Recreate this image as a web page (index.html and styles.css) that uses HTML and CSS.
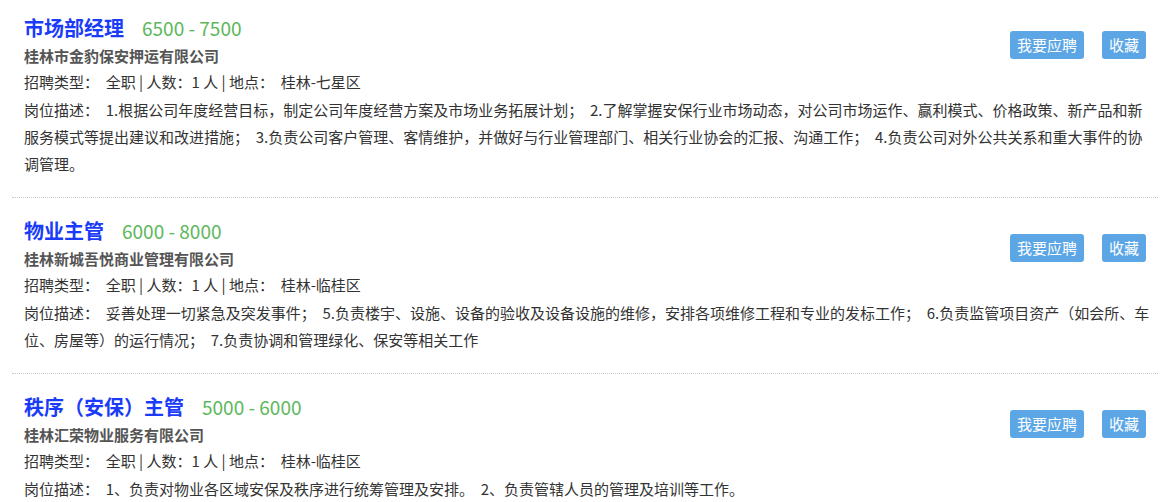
FILE: index.html
```html
<!DOCTYPE html>
<html lang="zh-CN">
<head>
  <meta charset="UTF-8">
  <meta name="viewport" content="width=device-width, initial-scale=1.0">
  <title>招聘职位列表</title>

  <link rel="stylesheet" href="styles.css">

</head>
<body>

  <ul class="job-list">
    <li class="job-item">
      <div class="job-head">
        <div class="job-main">
          <h3 class="job-title"><a href="#">市场部经理</a><span class="salary">6500 - 7500</span></h3>
          <p class="company">桂林市金豹保安押运有限公司</p>
        </div>
        <div class="job-actions">
          <a href="#" class="btn">我要应聘</a>
          <a href="#" class="btn">收藏</a>
        </div>
      </div>
      <p class="job-meta">招聘类型：&nbsp; 全职 | 人数：1 人 | 地点：&nbsp; 桂林-七星区</p>
      <p class="job-desc">岗位描述：&nbsp; 1.根据公司年度经营目标，制定公司年度经营方案及市场业务拓展计划；&nbsp; 2.了解掌握安保行业市场动态，对公司市场运作、赢利模式、价格政策、新产品和新服务模式等提出建议和改进措施；&nbsp; 3.负责公司客户管理、客情维护，并做好与行业管理部门、相关行业协会的汇报、沟通工作；&nbsp; 4.负责公司对外公共关系和重大事件的协调管理。</p>
    </li>

    <li class="job-item">
      <div class="job-head">
        <div class="job-main">
          <h3 class="job-title"><a href="#">物业主管</a><span class="salary">6000 - 8000</span></h3>
          <p class="company">桂林新城吾悦商业管理有限公司</p>
        </div>
        <div class="job-actions">
          <a href="#" class="btn">我要应聘</a>
          <a href="#" class="btn">收藏</a>
        </div>
      </div>
      <p class="job-meta">招聘类型：&nbsp; 全职 | 人数：1 人 | 地点：&nbsp; 桂林-临桂区</p>
      <p class="job-desc">岗位描述：&nbsp; 妥善处理一切紧急及突发事件；&nbsp; 5.负责楼宇、设施、设备的验收及设备设施的维修，安排各项维修工程和专业的发标工作；&nbsp; 6.负责监管项目资产（如会所、车位、房屋等）的运行情况；&nbsp; 7.负责协调和管理绿化、保安等相关工作</p>
    </li>

    <li class="job-item">
      <div class="job-head">
        <div class="job-main">
          <h3 class="job-title"><a href="#">秩序（安保）主管</a><span class="salary">5000 - 6000</span></h3>
          <p class="company">桂林汇荣物业服务有限公司</p>
        </div>
        <div class="job-actions">
          <a href="#" class="btn">我要应聘</a>
          <a href="#" class="btn">收藏</a>
        </div>
      </div>
      <p class="job-meta">招聘类型：&nbsp; 全职 | 人数：1 人 | 地点：&nbsp; 桂林-临桂区</p>
      <p class="job-desc">岗位描述：&nbsp; 1、负责对物业各区域安保及秩序进行统筹管理及安排。&nbsp; 2、负责管辖人员的管理及培训等工作。</p>
    </li>
  </ul>

</body>
</html>
```

FILE: styles.css
```css
body {
  margin: 0;
  font-family: "Noto Sans CJK SC", sans-serif;
  font-size: 15px;
  color: #333;
  background-color: #fff;
}

/* list is scrolled a little, first item starts above the window */
.job-list {
  list-style: none;
  margin: -5px 17px 0 12px;
  padding: 0;
}

.job-item {
  padding: 18px 12px 20px;
  border-bottom: 1px dotted #c8c8c8;
}

.job-head {
  display: flex;
  justify-content: space-between;
  align-items: flex-start;
}

.job-title {
  margin: 0;
  font-size: 20px;
  line-height: 30px;
  font-weight: bold;
}

.job-title a {
  color: #1a3cf8;
  text-decoration: none;
}

.salary {
  margin-left: 18px;
  font-size: 19px;
  font-weight: normal;
  color: #5cb85c;
}

.company {
  margin: 0;
  font-weight: bold;
  line-height: 26px;
  color: #555;
}

.job-actions {
  display: flex;
  gap: 18px;
  margin-top: 18px;
}

.btn {
  display: block;
  height: 28px;
  line-height: 28px;
  padding: 0 7px;
  border-radius: 3px;
  background-color: #5ca6e5;
  color: #fff;
  text-decoration: none;
}

.job-meta {
  margin: 0;
  line-height: 26px;
}

.job-desc {
  margin: 1px -4px 0 0;
  line-height: 27px;
}
```
